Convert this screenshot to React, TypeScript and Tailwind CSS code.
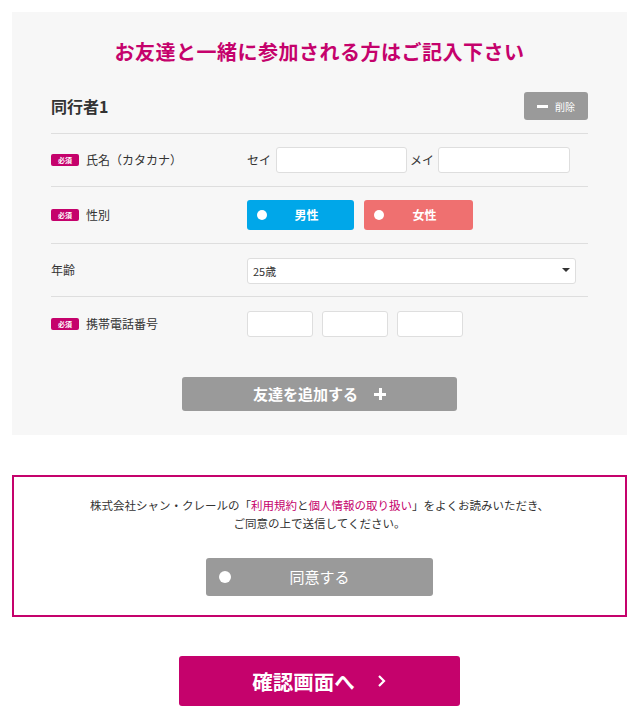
import { useState } from "react";

const font = { fontFamily: '"Noto Sans CJK JP", "Noto Sans", sans-serif' };

function Badge() {
  return (
    <span className="inline-flex h-[12px] w-[28px] items-center justify-center rounded-[2px] bg-[#c5026c] text-[7px] font-bold leading-none text-white">
      必須
    </span>
  );
}

function Row({
  label,
  required,
  children,
  last,
  h = "h-[53px]",
}: {
  label: string;
  required?: boolean;
  children: React.ReactNode;
  last?: boolean;
  h?: string;
}) {
  return (
    <div className={`flex items-center ${h} ${last ? "" : "border-b border-[#dedede]"}`}>
      <div className="flex w-[196px] items-center gap-[7px] text-[12px] text-[#333]">
        {required && <Badge />}
        <span>{label}</span>
      </div>
      <div className="flex flex-1 items-center">{children}</div>
    </div>
  );
}

export default function App() {
  const [gender, setGender] = useState<"m" | "f" | "">("");
  const [age, setAge] = useState("25");
  const [agree, setAgree] = useState(false);

  return (
    <div className="min-h-[720px] bg-white pt-3 pl-3 pr-[13px]" style={font}>
      {/* Companion form */}
      <div className="bg-[#f7f7f7] px-[39px] pt-7 pb-[24px]">
        <h1 className="text-center text-[20px] font-bold leading-6 tracking-[0.5px] text-[#c5026c]">
          お友達と一緒に参加される方はご記入下さい
        </h1>

        <div className="mt-7 flex items-center justify-between border-b border-[#dedede] pb-[13px]">
          <span className="text-[16px] font-bold text-[#333]">同行者1</span>
          <button className="flex h-[28px] w-[64px] items-center justify-center gap-[7px] rounded-[3px] bg-[#9a9a9a] text-[10px] text-white">
            <span className="h-[3px] w-[11px] bg-white" />
            削除
          </button>
        </div>

        <Row label="氏名（カタカナ）" required>
          <span className="mr-[5px] text-[12px] text-[#333]">セイ</span>
          <input className="h-[26px] w-[131px] rounded-[3px] border border-[#dedede] bg-white" />
          <span className="mr-[4px] ml-[3px] text-[12px] text-[#333]">メイ</span>
          <input className="h-[26px] w-[132px] rounded-[3px] border border-[#dedede] bg-white" />
        </Row>

        <Row label="性別" required h="h-[57px]">
          <button
            onClick={() => setGender("m")}
            className="relative flex h-[30px] w-[107px] items-center justify-center rounded-[3px] bg-[#00a7e9] pl-[12px] text-[12px] font-bold text-white"
          >
            <span className="absolute left-[10px] top-[10px] h-[10px] w-[10px] rounded-full bg-white" />
            {gender === "m" && <span className="absolute left-[13px] top-[13px] h-[4px] w-[4px] rounded-full bg-[#00a7e9]" />}
            男性
          </button>
          <button
            onClick={() => setGender("f")}
            className="relative ml-[10px] flex h-[30px] w-[109px] items-center justify-center rounded-[3px] bg-[#ef7070] pl-[12px] text-[12px] font-bold text-white"
          >
            <span className="absolute left-[10px] top-[10px] h-[10px] w-[10px] rounded-full bg-white" />
            {gender === "f" && <span className="absolute left-[13px] top-[13px] h-[4px] w-[4px] rounded-full bg-[#ef7070]" />}
            女性
          </button>
        </Row>

        <Row label="年齢">
          <div className="relative h-[26px] w-[329px]">
            <select
              value={age}
              onChange={(e) => setAge(e.target.value)}
              className="h-full w-full appearance-none rounded-[3px] border border-[#dedede] bg-white pl-[5px] text-[11px] text-[#333]"
            >
              {Array.from({ length: 60 }, (_, i) => i + 18).map((n) => (
                <option key={n} value={String(n)}>
                  {n}歳
                </option>
              ))}
            </select>
            <span className="pointer-events-none absolute right-[6px] top-[11px] h-0 w-0 border-x-[4px] border-t-[4px] border-x-transparent border-t-[#333]" />
          </div>
        </Row>

        <Row label="携帯電話番号" required last h="h-[54px]">
          <div className="flex gap-[9px]">
            <input className="h-[26px] w-[66px] rounded-[3px] border border-[#dedede] bg-white" />
            <input className="h-[26px] w-[66px] rounded-[3px] border border-[#dedede] bg-white" />
            <input className="h-[26px] w-[66px] rounded-[3px] border border-[#dedede] bg-white" />
          </div>
        </Row>

        <div className="mt-[26px] flex justify-center">
          <button className="flex h-[34px] w-[275px] items-center justify-center gap-[16px] rounded-[3px] bg-[#9a9a9a] text-[15px] font-bold text-white">
            友達を追加する
            <span className="relative h-[12px] w-[12px]">
              <span className="absolute left-0 top-[5px] h-[3px] w-[12px] bg-white" />
              <span className="absolute left-[4.5px] top-0 h-[12px] w-[3px] bg-white" />
            </span>
          </button>
        </div>
      </div>

      {/* Agreement */}
      <div className="mt-10 border-2 border-[#c5026c] px-4 pt-[19px] pb-[19px]">
        <p className="text-center text-[11.5px] leading-[18px] text-[#333]">
          株式会社シャン・クレールの「<span className="text-[#c5026c]">利用規約</span>と
          <span className="text-[#c5026c]">個人情報の取り扱い</span>」をよくお読みいただき、
          <br />
          ご同意の上で送信してください。
        </p>
        <div className="mt-[26px] flex justify-center">
          <button
            onClick={() => setAgree(!agree)}
            className={`relative flex h-[38px] w-[227px] items-center justify-center rounded-[3px] text-[15px] text-white ${
              agree ? "bg-[#c5026c]" : "bg-[#9a9a9a]"
            }`}
          >
            <span className="absolute left-[13px] top-[13px] h-[12px] w-[12px] rounded-full bg-white" />
            同意する
          </button>
        </div>
      </div>

      {/* Submit */}
      <div className="mt-[39px] flex justify-center">
        <button className="flex h-[50px] w-[281px] items-center justify-center gap-[22px] rounded-[3px] bg-[#c5026c] text-[20.5px] font-bold text-white">
          確認画面へ
          <svg width="10" height="14" viewBox="0 0 10 14" fill="none">
            <path d="M2 2l5 5-5 5" stroke="white" strokeWidth="2.2" />
          </svg>
        </button>
      </div>
    </div>
  );
}
